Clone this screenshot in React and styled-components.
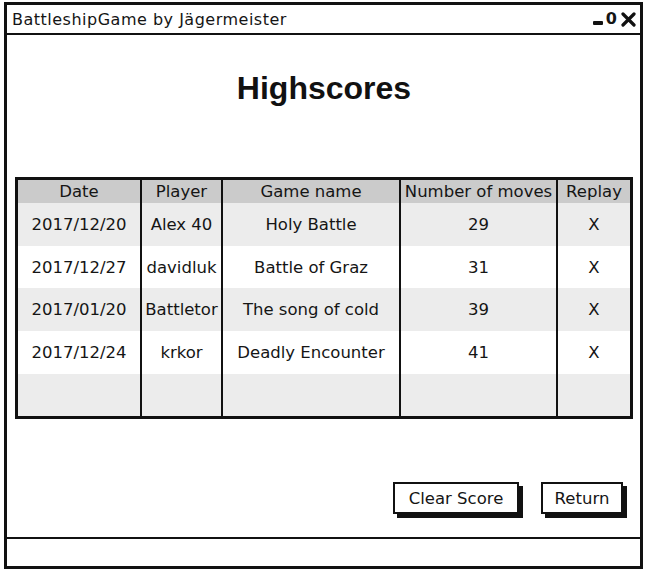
import styled, { createGlobalStyle } from "styled-components";

const GlobalStyle = createGlobalStyle`
  body {
    margin: 0;
    background: #fff;
    font-family: "DejaVu Sans", "Noto Sans", sans-serif;
    color: #151515;
  }
`;

const Window = styled.div`
  margin: 2px 0 0 4px;
  width: 639px;
  height: 567px;
  box-sizing: border-box;
  border: 3px solid #111;
  display: flex;
  flex-direction: column;
`;

const TitleBar = styled.div`
  height: 28px;
  border-bottom: 2px solid #111;
  display: flex;
  align-items: center;
  justify-content: space-between;
  padding: 0 3px 0 5px;
  font-size: 16px;
  letter-spacing: 0.5px;
`;

const Controls = styled.div`
  display: flex;
  align-items: center;
  gap: 3px;
`;

const Dash = styled.span`
  display: block;
  width: 10px;
  height: 4px;
  margin-top: 8px;
  background: #111;
  border-radius: 1px;
`;

const Zero = styled.span`
  font-weight: bold;
  font-size: 16px;
  line-height: 1;
  letter-spacing: 0;
`;

const Content = styled.div`
  flex: 1;
  display: flex;
  flex-direction: column;
  padding: 0 7px 0 8px;
`;

const Heading = styled.h1`
  margin: 34px 0 0;
  text-align: center;
  font-family: "Liberation Sans", Arial, sans-serif;
  font-size: 32px;
  line-height: 38px;
  font-weight: bold;
  color: #111;
`;

const Table = styled.div`
  margin-top: 70px;
  border: 3px solid #111;
  display: grid;
  grid-template-columns: 122px 81px 178px 157px 1fr;
  grid-template-rows: 23px repeat(5, 42.7px);
`;

const Cell = styled.div`
  display: flex;
  align-items: center;
  justify-content: center;
  font-size: 16.5px;
  white-space: nowrap;
  background: ${(p) => (p.$header ? "#cbcbcb" : p.$alt ? "#ececec" : "#fff")};
  border-left: ${(p) => (p.$first ? "none" : "2px solid #111")};
  padding-bottom: ${(p) => (p.$header ? "1px" : "0")};
`;

const ButtonRow = styled.div`
  margin-top: auto;
  margin-bottom: 23px;
  display: flex;
  justify-content: flex-end;
  gap: 22px;
  padding-right: 10px;
`;

const Button = styled.button`
  height: 32px;
  width: ${(p) => p.$w}px;
  box-sizing: border-box;
  border: 2px solid #111;
  background: #fff;
  box-shadow: 4px 4px 0 #111;
  font-family: "DejaVu Sans", "Noto Sans", sans-serif;
  font-size: 16.5px;
  color: #151515;
  padding: 0;
  cursor: pointer;
`;

const StatusBar = styled.div`
  height: 27px;
  border-top: 2px solid #111;
`;

const columns = ["Date", "Player", "Game name", "Number of moves", "Replay"];

const rows = [
  ["2017/12/20", "Alex 40", "Holy Battle", "29", "X"],
  ["2017/12/27", "davidluk", "Battle of Graz", "31", "X"],
  ["2017/01/20", "Battletor", "The song of cold", "39", "X"],
  ["2017/12/24", "krkor", "Deadly Encounter", "41", "X"],
  ["", "", "", "", ""],
];

export default function App() {
  return (
    <>
      <GlobalStyle />
      <Window>
        <TitleBar>
          <span>BattleshipGame by Jägermeister</span>
          <Controls>
            <Dash />
            <Zero>0</Zero>
            <svg width="17" height="15" viewBox="0 0 17 15">
              <path d="M3 2 L14 13 M14 2 L3 13" stroke="#111" strokeWidth="3.2" strokeLinecap="round" />
            </svg>
          </Controls>
        </TitleBar>
        <Content>
          <Heading>Highscores</Heading>
          <Table>
            {columns.map((c, i) => (
              <Cell key={c} $header $first={i === 0}>
                {c}
              </Cell>
            ))}
            {rows.map((r, ri) =>
              r.map((v, ci) => (
                <Cell key={`${ri}-${ci}`} $alt={ri % 2 === 0} $first={ci === 0}>
                  {v}
                </Cell>
              ))
            )}
          </Table>
          <ButtonRow>
            <Button $w={126}>Clear Score</Button>
            <Button $w={82}>Return</Button>
          </ButtonRow>
        </Content>
        <StatusBar />
      </Window>
    </>
  );
}
